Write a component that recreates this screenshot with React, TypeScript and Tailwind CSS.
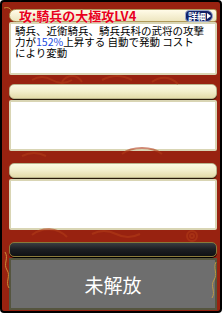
import React from 'react';

const font = { fontFamily: '"Noto Sans CJK JP", "Noto Sans", sans-serif' };

function Pill({ dark = false }: { dark?: boolean }) {
  return (
    <div
      className={
        dark
          ? 'h-[15px] rounded-[5px] border border-[#8a7a3a] bg-gradient-to-b from-[#3a3d42] via-[#1c1e22] to-[#101114] shadow-[0_1px_0_#000]'
          : 'h-[15px] rounded-[5px] border border-[#b9b48c] bg-gradient-to-b from-[#fbf8e2] via-[#f2eecb] to-[#e4dcaa] shadow-[0_1px_0_#2a1a08]'
      }
    />
  );
}

function Box() {
  return <div className="h-[51px] border-2 border-[#d9d5b4] bg-white rounded-[2px]" />;
}

export default function App() {
  return (
    <div className="w-[224px] h-[315px] bg-white" style={font}>
      <div className="relative w-[222px] h-[313px] rounded-[4px] border-2 border-black bg-[#982210] overflow-hidden pt-[7px] pl-[7px] pr-[3px] flex flex-col">
        {/* background ornament */}
        <svg className="absolute inset-0 pointer-events-none" width="218" height="309" viewBox="0 0 218 309">
          <g fill="none" stroke="#b23c18" strokeWidth="2" opacity="0.6">
            <path d="M30 78 q10 -6 20 0 t20 0" />
            <path d="M60 80 c5 -8 15 -8 20 0" />
            <path d="M100 78 q15 -8 30 0" />
            <path d="M150 80 c8 -6 18 -6 26 2" />
            <path d="M20 154 q12 -6 24 0" />
            <path d="M120 152 c10 -8 30 -8 40 0" />
            <path d="M30 233 c10 -8 25 -8 35 2" />
            <path d="M90 232 q12 -6 24 0 t24 0" />
            <circle cx="190" cy="234" r="5" />
            <circle cx="190" cy="234" r="2" />
          </g>
          <g fill="none" stroke="#d4a640" strokeWidth="1" opacity="0.8">
            <path d="M3 250 c4 6 -2 12 2 18 s-2 12 2 18" />
            <path d="M2 6 q6 -2 8 4" />
            <path d="M214 260 c-3 6 2 12 -2 18 s2 12 -2 18" />
          </g>
        </svg>

        {/* header */}
        <div className="relative h-[13px] rounded-l-[7px] rounded-r-[3px] border border-[#b09a5a] bg-gradient-to-b from-[#fffbe8] to-[#eee6c0] flex items-center pl-[9px]">
          <span
            className="text-[13px] font-bold text-[#e8001c] leading-none whitespace-nowrap"
            style={{ textShadow: '0 0 1px #fff' }}
          >
            攻:騎兵の大極攻LV4
          </span>
          <div className="absolute right-[3px] top-[0px] h-[12px] w-[28px] rounded-l-[4px] rounded-r-[6px] border border-[#9aa6cc] bg-[#132266] flex items-center pl-[2px]">
            <span className="text-[9px] font-bold text-white leading-none">詳細</span>
            <span className="ml-[1px] w-0 h-0 border-y-[3px] border-y-transparent border-l-[4px] border-l-white" />
          </div>
        </div>

        {/* description */}
        <div className="h-[53px] border-2 border-[#d9d5b4] bg-white rounded-[2px] px-[4px] pt-[1px]">
          <p className="text-[10.5px] leading-[11px] text-black whitespace-nowrap">
            騎兵、近衛騎兵、騎兵兵科の武将の攻撃
            <br />
            力が<span className="text-[#1a4ae0]">152%</span>上昇する 自動で発動 コスト
            <br />
            により変動
          </p>
        </div>

        <div className="mt-[9px]">
          <Pill />
        </div>
        <div className="mt-[1px]">
          <Box />
        </div>

        <div className="mt-[12px]">
          <Pill />
        </div>
        <div className="mt-[1px]">
          <Box />
        </div>

        <div className="mt-[12px]">
          <Pill dark />
        </div>
        <div className="mt-[1px] h-[52px] border-2 border-[#55553f] bg-[#6e6e6e] flex items-center justify-center">
          <span className="text-[19px] text-white leading-none">未解放</span>
        </div>
      </div>
    </div>
  );
}
